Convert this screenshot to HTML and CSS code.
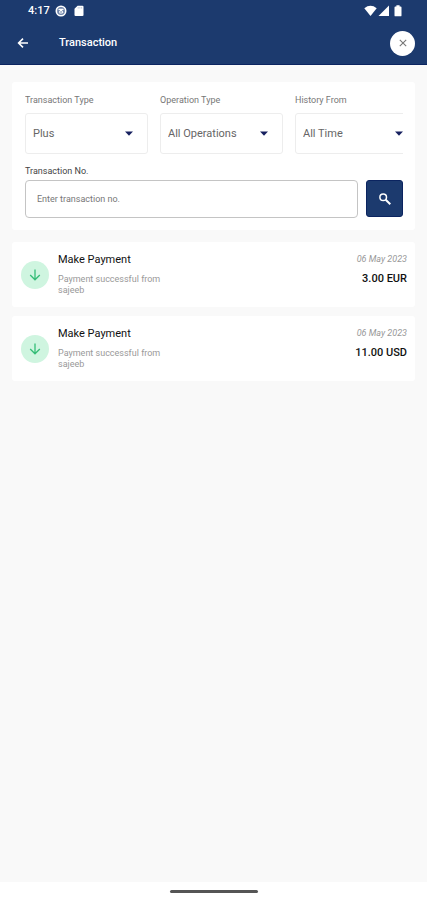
FILE: index.html
```html
<!DOCTYPE html>
<html lang="en">
<head>
<meta charset="utf-8">
<meta name="viewport" content="width=device-width, initial-scale=1">
<title>Transaction</title>
<link rel="stylesheet" href="styles.css">
</head>
<body>
<header class="top">
  <div class="status">
    <span class="clock">4:17</span>
    <svg width="12" height="12" viewBox="0 0 12 12"><circle cx="6" cy="6" r="4.7" fill="#6f84aa" stroke="#fff" stroke-width="1.6"/><path d="M3.5 4.3h5M6 4.5L4.3 7.5M6 4.5l2 3.2M4.5 8h3" stroke="#fff" stroke-width="1.2" fill="none"/></svg>
    <svg class="sd" width="10" height="12" viewBox="0 0 10 12"><path d="M3.6.7H8.4Q9.5.7 9.5 1.8V10Q9.5 11.1 8.4 11.1H1.6Q.5 11.1.5 10V3.8Z" fill="#fff"/><path d="M4.2 2v1.6M5.9 2v1.6M7.6 2v1.6" stroke="#aab6cd" stroke-width=".7"/></svg>
    <div class="signals">
      <svg width="13" height="12" viewBox="0 0 13 12"><path d="M.3 3.2Q6.5-1.7 12.7 3.2L6.5 11Z" fill="#fff"/></svg>
      <svg width="12" height="12" viewBox="0 0 12 12"><path d="M11 .5V11H.5Z" fill="#fff"/></svg>
      <svg class="battery" width="8" height="12" viewBox="0 0 8 12"><path d="M2.4.3h3.2v1.2h1Q7.5 1.5 7.5 2.4V10.4Q7.5 11.3 6.6 11.3H1.4Q.5 11.3.5 10.4V2.4Q.5 1.5 1.4 1.5h1Z" fill="#fff"/></svg>
    </div>
  </div>
  <div class="appbar">
    <button class="back" aria-label="Back"><svg width="12" height="12" viewBox="0 0 12 12"><path d="M11 6H2M6 1.6L1.6 6 6 10.4" fill="none" stroke="#fff" stroke-width="1.6"/></svg></button>
    <h1>Transaction</h1>
    <button class="close" aria-label="Close"><svg width="8" height="8" viewBox="0 0 8 8"><path d="M.8.8l6.4 6.4M7.2.8L.8 7.2" stroke="#777" stroke-width="1.1"/></svg></button>
  </div>
</header>
<main>
  <form class="card filters">
    <div class="filter-row">
      <div class="field"><label for="type">Transaction Type</label><div class="pick"><select id="type"><option>Plus</option></select><svg width="8" height="5" viewBox="0 0 8 5"><path d="M0 .5h8L4 4.7Z" fill="#16205f"/></svg></div></div>
      <div class="field"><label for="operation">Operation Type</label><div class="pick"><select id="operation"><option>All Operations</option></select><svg width="8" height="5" viewBox="0 0 8 5"><path d="M0 .5h8L4 4.7Z" fill="#16205f"/></svg></div></div>
      <div class="field"><label for="history">History From</label><div class="pick"><select id="history"><option>All Time</option></select><svg width="8" height="5" viewBox="0 0 8 5"><path d="M0 .5h8L4 4.7Z" fill="#16205f"/></svg></div></div>
    </div>
    <label class="number-label" for="number">Transaction No.</label>
    <div class="search-row">
      <input id="number" type="text" placeholder="Enter transaction no.">
      <button class="search" type="button" aria-label="Search"><svg width="14" height="14" viewBox="0 0 14 14"><circle cx="5.2" cy="5.2" r="3.3" fill="none" stroke="#fff" stroke-width="1.5"/><path d="M7.7 7.7l4.6 4.6" stroke="#fff" stroke-width="2"/></svg></button>
    </div>
  </form>
  <article class="card payment">
    <span class="badge"><svg width="12" height="12" viewBox="0 0 12 12"><path d="M6 .5v10M1.2 6L6 10.8 10.8 6" fill="none" stroke="#35bd77" stroke-width="1.3"/></svg></span>
    <div class="detail"><h2>Make Payment</h2><p>Payment successful from sajeeb</p></div>
    <div class="amount"><time datetime="2023-05-06">06 May 2023</time><strong>3.00 EUR</strong></div>
  </article>
  <article class="card payment">
    <span class="badge"><svg width="12" height="12" viewBox="0 0 12 12"><path d="M6 .5v10M1.2 6L6 10.8 10.8 6" fill="none" stroke="#35bd77" stroke-width="1.3"/></svg></span>
    <div class="detail"><h2>Make Payment</h2><p>Payment successful from sajeeb</p></div>
    <div class="amount"><time datetime="2023-05-06">06 May 2023</time><strong>11.00 USD</strong></div>
  </article>
</main>
<footer class="nav"><span class="handle"></span></footer>
</body>
</html>
```
FILE: styles.css
```css
* { box-sizing: border-box; }
body {
  margin: 0;
  min-height: 100vh;
  display: flex;
  flex-direction: column;
  background: #f9f9f9;
  color: #111;
  font-family: Roboto, "Liberation Sans", sans-serif;
}
svg { display: block; flex: none; }
h1, h2, p { margin: 0; }
button { border: 0; padding: 0; display: grid; place-items: center; }
.top { background: #1c3a6e; color: #fff; border-bottom: 1px solid #0b2460; }
.status { display: flex; align-items: center; height: 22px; padding: 0 25px 0 28px; }
.clock { font-size: 11px; line-height: 22px; font-weight: 500; margin-right: 5px; }
.sd { margin-left: 7px; }
.signals { display: flex; gap: 1px; margin-left: auto; }
.battery { margin-left: 3px; }
.appbar { display: flex; align-items: center; height: 42px; padding: 0 12px 0 17px; }
.back { width: 12px; height: 24px; background: none; }
h1 { flex: 1; margin-left: 30px; font-size: 11px; line-height: 16px; font-weight: 500; }
.close { width: 25px; height: 25px; border-radius: 50%; background: #fff; }
main { flex: 1; display: flex; flex-direction: column; gap: 9px; padding: 17px 12px; }
.card { background: #fff; border-radius: 3px; }
.filters { padding: 12px 12px 12px 13px; margin-bottom: 3px; }
.filter-row { display: flex; gap: 12px; overflow: hidden; }
.field { flex: 0 0 123px; }
label { display: block; font-size: 9px; line-height: 12px; color: #777; }
.field label { margin-bottom: 7px; }
.pick { display: flex; align-items: center; height: 41px; padding-right: 14px; border: 1px solid #ededed; border-radius: 3px; }
select { appearance: none; flex: 1; min-width: 0; height: 39px; padding: 0 0 0 7px; border: 0; background: none; color: #666; font: 11px Roboto, "Liberation Sans", sans-serif; }
.pick svg { pointer-events: none; }
.number-label { margin: 11px 0 3px; color: #444; }
.search-row { display: flex; gap: 8px; }
input { flex: 1; min-width: 0; height: 38px; padding: 0 11px; border: 1px solid #c4c4c4; border-radius: 4px; background: #fff; color: #444; font: 9px Roboto, "Liberation Sans", sans-serif; }
input::placeholder { color: #777; opacity: 1; }
.search { width: 37px; height: 37px; border-radius: 3px; background: #1c3a6e; border: 1px solid #0b2460; }
.payment { display: flex; align-items: flex-start; padding: 11px 8px 11px 9px; }
.badge { display: grid; place-items: center; width: 28px; height: 28px; margin: 8px 9px 0 0; border-radius: 50%; background: #cff5e0; }
.detail { flex: 1; }
h2 { font-size: 11px; line-height: 13px; font-weight: 400; }
.detail p { max-width: 110px; margin-top: 8px; font-size: 9px; line-height: 11px; color: #999; }
.amount { display: flex; flex-direction: column; align-items: flex-end; gap: 6px; padding-top: 1px; }
time { font-size: 9px; line-height: 11px; font-style: italic; color: #999; }
strong { font-size: 11px; line-height: 15px; font-weight: 500; }
.nav { display: grid; place-items: center; height: 18px; background: #fff; }
.handle { width: 88px; height: 3px; border-radius: 2px; background: #555; }
```
